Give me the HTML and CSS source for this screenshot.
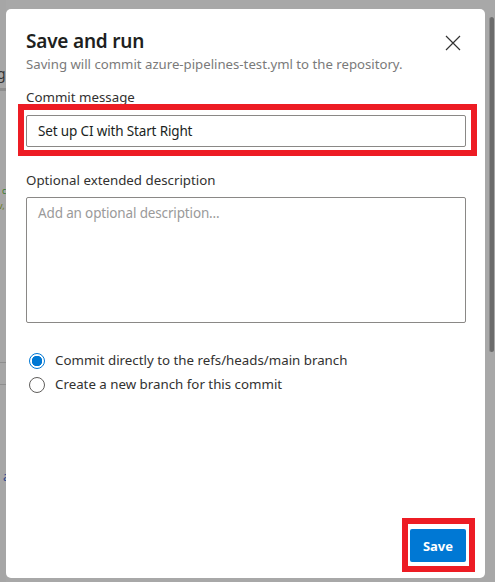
FILE: index.html
```html
<!DOCTYPE html>
<html>
<head>
<meta charset="utf-8">
<link rel="stylesheet" href="styles.css">
</head>
<body>
<div class="screen">
  <div class="page-strip">
    <span class="bg-g">g</span>
    <span class="bg-line l1"></span>
    <span class="bg-green">c</span>
    <span class="bg-green2">v,</span>
    <span class="bg-line l2"></span>
    <span class="bg-line l3"></span>
    <span class="bg-a">a</span>
  </div>
  <div class="dialog">
    <div class="header">
      <div class="titles">
        <h1 class="title">Save and run</h1>
        <p class="subtitle">Saving will commit azure-pipelines-test.yml to the repository.</p>
      </div>
      <button class="close" aria-label="Close">
        <svg width="16" height="16" viewBox="0 0 16 16"><path d="M1 1L15 15M15 1L1 15" stroke="#333" stroke-width="1.2" fill="none"/></svg>
      </button>
    </div>
    <label class="label first">Commit message</label>
    <div class="highlight">
      <div class="input">Set up CI with Start Right</div>
    </div>
    <label class="label second">Optional extended description</label>
    <div class="textarea">Add an optional description...</div>
    <div class="radios">
      <div class="radio-row"><span class="radio checked"></span><span>Commit directly to the refs/heads/main branch</span></div>
      <div class="radio-row"><span class="radio"></span><span>Create a new branch for this commit</span></div>
    </div>
    <div class="footer">
      <div class="highlight-btn"><button class="save">Save</button></div>
    </div>
  </div>
  <div class="right-strip"><div class="scrollbar"></div></div>
</div>
</body>
</html>
```
FILE: styles.css
```css
* { box-sizing: border-box; }
html, body { margin: 0; padding: 0; }
body {
  width: 495px;
  height: 582px;
  overflow: hidden;
  background: #a8a8a8;
  font-family: "Noto Sans", "Open Sans", sans-serif;
}
.screen {
  display: flex;
  height: 582px;
}
.page-strip {
  width: 6px;
  flex: none;
  position: relative;
  overflow: hidden;
  background: #a6a6a6;
}
.bg-g { position: absolute; left: -3px; top: 64px; font-size: 14px; color: #333; text-decoration: underline; }
.bg-line { position: absolute; left: 0; width: 6px; height: 3px; background: #8e8e8e; }
.l1 { top: 88px; }
.l2 { top: 362px; height: 1px; }
.l3 { top: 384px; height: 1px; }
.bg-green { position: absolute; left: 2px; top: 184px; font-size: 9px; color: #3a7a2a; }
.bg-green2 { position: absolute; left: -2px; top: 199px; font-size: 9px; color: #6a7a1a; }
.bg-a { position: absolute; left: 3px; top: 468px; font-size: 12px; color: #1f3f8f; }

.dialog {
  margin-top: 9px;
  width: 479px;
  height: 569px;
  flex: none;
  background: #fff;
  border-radius: 5px;
  padding: 18px 20px 0 20px;
  display: flex;
  flex-direction: column;
}
.header {
  display: flex;
  justify-content: space-between;
  align-items: flex-start;
}
.title {
  margin: 0;
  font-size: 19px;
  font-weight: 600;
  line-height: 28px;
  color: #201f1e;
  letter-spacing: -0.2px;
}
.subtitle {
  margin: 1px 0 0 0;
  font-size: 13.2px;
  line-height: 16px;
  color: #7a7a7a;
}
.close {
  border: none;
  background: transparent;
  padding: 0;
  margin: 8px 4px 0 0;
  width: 16px;
  height: 16px;
  display: flex;
}
.label {
  display: block;
  font-size: 13.3px;
  line-height: 18px;
  color: #323130;
}
.label.first { margin-top: 16px; }
.highlight {
  margin: -2px 0 0 -8px;
  width: 459px;
  border: 6px solid #ed1c24;
  padding: 5px 5px 3px 2px;
}
.input {
  height: 32px;
  border: 1px solid #8a8886;
  border-radius: 2px;
  padding: 0 11px;
  font-size: 13.5px;
  line-height: 30px;
  color: #201f1e;
  letter-spacing: -0.15px;
}
.label.second { margin-top: 15px; }
.textarea {
  margin-top: 8px;
  height: 126px;
  width: 440px;
  border: 1px solid #8a8886;
  border-radius: 2px;
  padding: 6px 11px;
  font-size: 13.5px;
  line-height: 18px;
  color: #9a9a9a;
  letter-spacing: -0.15px;
}
.radios {
  margin-top: 29px;
  display: flex;
  flex-direction: column;
  gap: 7px;
}
.radio-row {
  display: flex;
  align-items: center;
  gap: 10px;
  padding-left: 3px;
  font-size: 13.3px;
  line-height: 17px;
  color: #323130;
}
.radio {
  width: 16px;
  height: 16px;
  border-radius: 50%;
  border: 1px solid #605e5c;
  flex: none;
}
.radio.checked {
  border: 1px solid #0078d4;
  background: radial-gradient(circle, #0078d4 0 5px, #fff 5.5px);
}
.footer {
  margin-top: auto;
  display: flex;
  justify-content: flex-end;
  padding-bottom: 6px;
  margin-right: -10px;
}
.highlight-btn {
  border: 6px solid #ed1c24;
  padding: 5px 3px 4px 2px;
  width: 73px;
}
.save {
  width: 56px;
  height: 33px;
  border: none;
  border-radius: 2px;
  background: #0078d4;
  color: #fff;
  font-family: "Noto Sans", "Open Sans", sans-serif;
  font-weight: 700;
  font-size: 13px;
  padding: 0;
}
.right-strip {
  flex: none;
  width: 10px;
  padding: 17px 1px 0 4px;
}
.scrollbar {
  height: 335px;
  background: #6b6b6b;
  border-radius: 3px;
  border-left: 1px solid #8a8a8a;
}
```
